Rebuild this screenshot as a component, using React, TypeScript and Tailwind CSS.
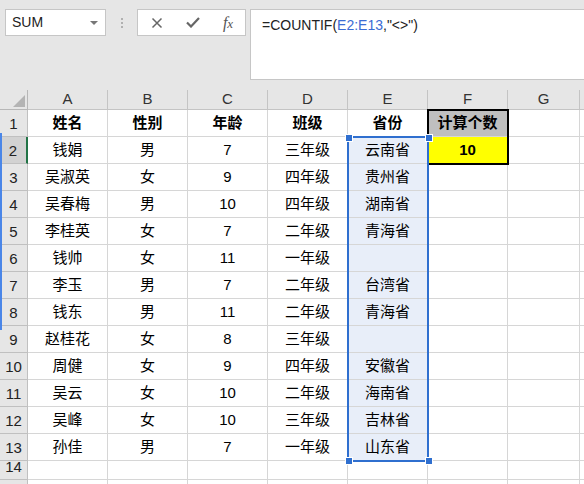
import React from "react";

const cols = ["A", "B", "C", "D", "E", "F", "G"];
const colW = ["w-[80px]", "w-[80px]", "w-[80px]", "w-[80px]", "w-[80px]", "w-[80px]", "w-[72px]"];

const rows: string[][] = [
  ["姓名", "性别", "年龄", "班级", "省份", "计算个数", ""],
  ["钱娟", "男", "7", "三年级", "云南省", "10", ""],
  ["吴淑英", "女", "9", "四年级", "贵州省", "", ""],
  ["吴春梅", "男", "10", "四年级", "湖南省", "", ""],
  ["李桂英", "女", "7", "二年级", "青海省", "", ""],
  ["钱帅", "女", "11", "一年级", "", "", ""],
  ["李玉", "男", "7", "二年级", "台湾省", "", ""],
  ["钱东", "男", "11", "二年级", "青海省", "", ""],
  ["赵桂花", "女", "8", "三年级", "", "", ""],
  ["周健", "女", "9", "四年级", "安徽省", "", ""],
  ["吴云", "女", "10", "二年级", "海南省", "", ""],
  ["吴峰", "女", "10", "三年级", "吉林省", "", ""],
  ["孙佳", "男", "7", "一年级", "山东省", "", ""],
  ["", "", "", "", "", "", ""],
  ["", "", "", "", "", "", ""],
];

function cellBg(r: number, c: number) {
  if (r === 0 && c === 5) return "bg-[#bfbfbf]";
  if (r === 1 && c === 5) return "bg-[#ffff00]";
  if (c === 4 && r >= 1 && r <= 12) return "bg-[#e8eef9]";
  return "bg-white";
}

export default function App() {
  return (
    <div
      className="w-[584px] h-[484px] overflow-hidden bg-[#e6e6e6] relative"
      style={{ fontFamily: '"Liberation Sans", "Noto Sans CJK SC", sans-serif' }}
    >
      {/* toolbar */}
      <div className="h-[90px] flex items-start pt-[9px] pl-[5px]">
        <div className="w-[101px] h-[27px] bg-white border border-[#c6c6c6] flex items-center justify-between pl-[6px] pr-[6px] text-[14px] text-[#222]">
          <span>SUM</span>
          <svg width="10" height="6" viewBox="0 0 10 6">
            <path d="M1 1 L9 1 L5 5 Z" fill="#777" />
          </svg>
        </div>
        <div className="w-[31px] h-[27px] flex flex-col items-center justify-center gap-[2px]">
          <span className="w-[2px] h-[2px] bg-[#b0b0b0]" />
          <span className="w-[2px] h-[2px] bg-[#b0b0b0]" />
          <span className="w-[2px] h-[2px] bg-[#b0b0b0]" />
        </div>
        <div className="w-[109px] h-[27px] bg-white border border-[#c6c6c6] flex items-center">
          <div className="w-[36px] flex justify-center ml-[1px]">
            <svg width="12" height="12" viewBox="0 0 12 12">
              <path d="M1.5 1.5 L10.5 10.5 M10.5 1.5 L1.5 10.5" stroke="#666" strokeWidth="1.5" />
            </svg>
          </div>
          <div className="w-[36px] flex justify-center">
            <svg width="14" height="11" viewBox="0 0 14 11">
              <path d="M1 5.5 L5 9.5 L13 1" stroke="#666" strokeWidth="2.2" fill="none" />
            </svg>
          </div>
          <div className="flex-1 flex justify-center">
            <span
              className="italic text-[16px] text-[#555] leading-none"
              style={{ fontFamily: '"Liberation Serif", serif' }}
            >
              f<span className="text-[13px]">x</span>
            </span>
          </div>
        </div>
        <div className="ml-[4px] flex-1 h-[71px] bg-white border-l border-t border-b border-[#c6c6c6] pl-[11px] pt-[5px] text-[14px] text-[#222]">
          =COUNTIF(<span className="text-[#3b6cd4]">E2:E13</span>,"&lt;&gt;")
        </div>
      </div>

      {/* grid */}
      <div className="relative">
        {/* column headers */}
        <div className="flex h-[20px]">
          <div className="w-[28px] h-[20px] bg-[#e6e6e6] border-r border-b border-[#b7b7b7] relative flex items-end justify-end p-[2px]">
            <svg width="12" height="12" viewBox="0 0 12 12">
              <path d="M12 0 L12 12 L0 12 Z" fill="#b4b4b4" />
            </svg>
          </div>
          {cols.map((c, i) => (
            <div
              key={c}
              className={`${colW[i]} h-[20px] shrink-0 bg-[#e6e6e6] border-r border-b border-[#c4c4c4] flex items-center justify-center text-[15px] text-[#333]`}
            >
              {c}
            </div>
          ))}
          <div className="flex-1 h-[20px] bg-[#e6e6e6] border-b border-[#c4c4c4]" />
        </div>
        {rows.map((row, r) => (
          <div key={r} className={`flex ${r < 13 ? "h-[27px]" : "h-[19px]"}`}>
            <div
              className={`w-[28px] shrink-0 border-r border-b border-[#c0c0c0] flex items-end justify-center pb-[1px] text-[15px] text-[#222] ${
                r === 1 ? "bg-[#d2d2d2] border-r-2 border-r-[#217346] text-[#1f5e3c]" : "bg-[#e6e6e6]"
              } ${r === 14 ? "border-b-0" : ""}`}
            >
              {r < 14 ? r + 1 : ""}
            </div>
            {row.map((v, c) => (
              <div
                key={c}
                className={`${colW[c]} shrink-0 border-r border-b border-[#d6d6d6] flex items-center justify-center text-[15px] text-black ${cellBg(
                  r,
                  c
                )} ${r === 0 || (r === 1 && c === 5) ? "font-bold" : ""}`}
              >
                {v}
              </div>
            ))}
            <div className="flex-1 bg-white border-b border-[#d6d6d6]" />
          </div>
        ))}

        {/* F1:F2 thick border */}
        <div className="absolute left-[427px] top-[19px] w-[82px] h-[56px] border-2 border-black pointer-events-none" />

        {/* selection E2:E13 */}
        <div className="absolute left-[347px] top-[46px] w-[82px] h-[326px] border-2 border-[#2f6fcf] pointer-events-none" />
        <div className="absolute left-[345px] top-[44px] w-[6px] h-[6px] bg-[#2f6fcf] border border-white box-content" />
        <div className="absolute left-[425px] top-[44px] w-[6px] h-[6px] bg-[#2f6fcf] border border-white box-content" />
        <div className="absolute left-[345px] top-[367px] w-[6px] h-[6px] bg-[#2f6fcf] border border-white box-content" />
        <div className="absolute left-[425px] top-[367px] w-[6px] h-[6px] bg-[#2f6fcf] border border-white box-content" />

        {/* left marker */}
        <div className="absolute left-0 top-[43px] w-[2px] h-[197px] bg-[#4a86e8]" />
      </div>
    </div>
  );
}
